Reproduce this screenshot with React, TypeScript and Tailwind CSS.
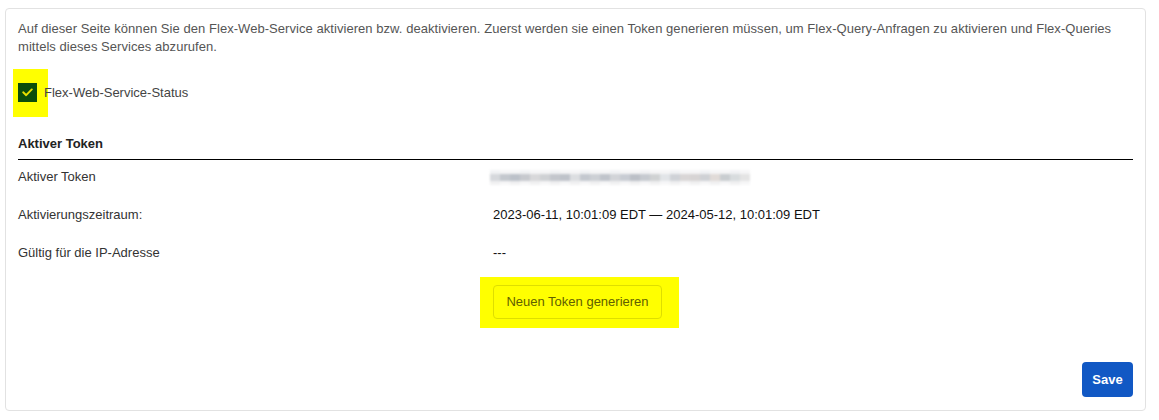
import React from "react";

const tokenMid = [
  "#d6d8dc", "#c4c8ce", "#bcc1c9", "#c7c9ce", "#d8d8da", "#cfd1d4", "#c3c6cc", "#bfc3ca",
  "#dcdee1", "#c4c8cf", "#cdd0d5", "#c0c4cb", "#d2d4d8", "#c8ccd3", "#bcc0c7", "#c6cad0",
  "#d0d2d3", "#e2e5e8", "#cfd2d7", "#d9d6d6", "#d7d4d4", "#cfd1d5", "#e1dbd8", "#c9cdd0",
  "#d8dcde", "#e4e4e4",
];

function Row({ label, children }: { label: string; children: React.ReactNode }) {
  return (
    <div className="flex h-[38px] text-[13px] leading-[18px]">
      <div className="w-[475px] text-[#333]">{label}</div>
      <div className="flex-1 text-[#111] font-medium">{children}</div>
    </div>
  );
}

export default function App() {
  return (
    <div className="bg-white min-h-[420px] pt-[8px] pl-[5px]" style={{ fontFamily: '"Liberation Sans", Arial, sans-serif' }}>
      <div className="w-[1141px] border border-[#e2e2e2] rounded-[4px] pt-[11px] px-[12px] pb-[13px]">
        <p className="text-[13px] leading-[18px] text-[#555] tracking-[0.05px]">
          Auf dieser Seite können Sie den Flex-Web-Service aktivieren bzw. deaktivieren. Zuerst werden sie einen Token generieren müssen, um Flex-Query-Anfragen zu aktivieren und Flex-Queries mittels dieses Services abzurufen.
        </p>

        {/* Status checkbox */}
        <div className="relative mt-[27px] flex items-center gap-[7px] h-[19px]">
          <span className="absolute -left-[5px] -top-[14px] w-[35px] h-[48px] bg-[#ffff00]" />
          <span className="relative w-[19px] h-[19px] bg-[#0b4d0b] flex items-center justify-center">
            <svg width="11" height="9" viewBox="0 0 11 9" fill="none">
              <path d="M1.2 4.3 L4.2 7.2 L9.8 1.4" stroke="#e8e000" strokeWidth="1.9" strokeLinecap="round" strokeLinejoin="round" />
            </svg>
          </span>
          <span className="relative text-[13px] leading-[18px] text-[#444]">Flex-Web-Service-Status</span>
        </div>

        {/* Aktiver Token */}
        <div className="mt-[33px] pb-[6px] border-b border-black text-[13px] leading-[18px] font-bold text-[#222]">
          Aktiver Token
        </div>

        <div className="mt-[8px]">
          <Row label="Aktiver Token">
            <div className="flex flex-col -ml-[3px] mt-[2px] blur-[0.8px] w-[260px]">
              <div className="flex h-[4px]">
                {tokenMid.map((c, i) => (
                  <span key={i} className="flex-1 bg-[#f3f3f4] opacity-80" style={i % 3 === 0 ? { backgroundColor: "#eeeff1" } : undefined} />
                ))}
              </div>
              <div className="flex h-[7px]">
                {tokenMid.map((c, i) => (
                  <span key={i} className="flex-1" style={{ backgroundColor: c }} />
                ))}
              </div>
              <div className="flex h-[4px]">
                {tokenMid.map((c, i) => (
                  <span key={i} className="flex-1" style={{ backgroundColor: i % 2 === 0 ? "#f1f1f2" : "#f7f7f8" }} />
                ))}
              </div>
            </div>
          </Row>
          <Row label="Aktivierungszeitraum:">2023-06-11, 10:01:09 EDT — 2024-05-12, 10:01:09 EDT</Row>
          <Row label="Gültig für die IP-Adresse">---</Row>
        </div>

        <div className="mt-[3px] pl-[475px]">
          <div className="relative inline-block">
            <span className="absolute -left-[13px] -top-[8px] w-[199px] h-[51px] bg-[#ffff00]" />
            <button className="relative h-[34px] w-[169px] rounded-[4px] border border-[#dede00] text-[13px] font-medium text-[#5f6000]">
              Neuen Token generieren
            </button>
          </div>
        </div>

        <div className="mt-[43px] flex justify-end">
          <button className="h-[35px] w-[51px] rounded-[4px] bg-[#1158c4] text-white text-[13px] font-bold">
            Save
          </button>
        </div>
      </div>
    </div>
  );
}
